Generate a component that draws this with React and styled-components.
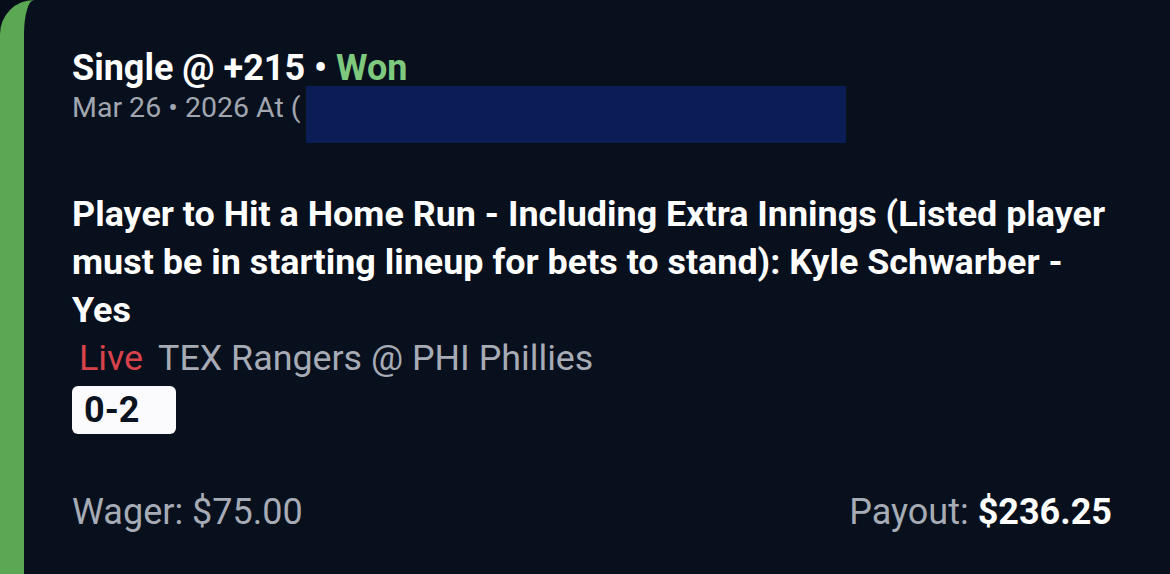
import React from "react";
import styled, { createGlobalStyle } from "styled-components";

const GlobalStyle = createGlobalStyle`
  html, body {
    margin: 0;
    padding: 0;
    background: #070e1a;
  }
  body {
    font-family: Roboto, "Liberation Sans", sans-serif;
  }
`;

function App() {
  return (
    <>
      <GlobalStyle />
      <Card>
        <Header>
          <Title>
            Single @ +215 • <Status>Won</Status>
          </Title>
          <DateRow>
            Mar 26 • 2026 At (
            <Redacted />
          </DateRow>
        </Header>

        <Market>
          Player to Hit a Home Run - Including Extra Innings (Listed player
          must be in starting lineup for bets to stand): Kyle Schwarber - Yes
        </Market>

        <EventRow>
          <Live>Live</Live>
          <Teams>TEX Rangers @ PHI Phillies</Teams>
        </EventRow>
        <Score>0-2</Score>

        <Footer>
          <Amount>Wager: $75.00</Amount>
          <Amount>
            Payout: <Strong>$236.25</Strong>
          </Amount>
        </Footer>
      </Card>
    </>
  );
}

const Card = styled.div`
  box-sizing: border-box;
  height: 574px;
  display: flex;
  flex-direction: column;
  background: #08101d;
  border-left: 24px solid #5aa853;
  border-top-left-radius: 34px;
  padding: 47px 58px 0 48px;
  color: #ffffff;
`;

const Header = styled.div`
  display: flex;
  flex-direction: column;
`;

const Title = styled.div`
  font-size: 36px;
  font-weight: 700;
  line-height: 42px;
`;

const Status = styled.span`
  color: #7fc97f;
`;

const DateRow = styled.div`
  position: relative;
  font-size: 28.5px;
  line-height: 38px;
  color: #a1a6b0;
`;

const Redacted = styled.span`
  position: absolute;
  left: 234px;
  top: -3px;
  width: 540px;
  height: 57px;
  background: #0a1e55;
`;

const Market = styled.div`
  margin-top: 63px;
  font-size: 35.9px;
  font-weight: 700;
  line-height: 48px;
`;

const EventRow = styled.div`
  display: flex;
  gap: 15px;
  padding-left: 7px;
  font-size: 35.8px;
  line-height: 48px;
`;

const Live = styled.span`
  color: #d8434b;
`;

const Teams = styled.span`
  color: #a6abb5;
`;

const Score = styled.div`
  box-sizing: border-box;
  width: 104px;
  height: 48px;
  margin-top: 4px;
  padding-left: 12px;
  border-radius: 6px;
  background: #fbfbfd;
  color: #0b1220;
  font-size: 36px;
  font-weight: 700;
  line-height: 48px;
`;

const Footer = styled.div`
  display: flex;
  justify-content: space-between;
  margin-top: auto;
  margin-bottom: 40px;
  font-size: 36px;
  line-height: 44px;
`;

const Amount = styled.span`
  color: #a6abb5;
`;

const Strong = styled.span`
  color: #ffffff;
  font-weight: 700;
`;

export default App;
